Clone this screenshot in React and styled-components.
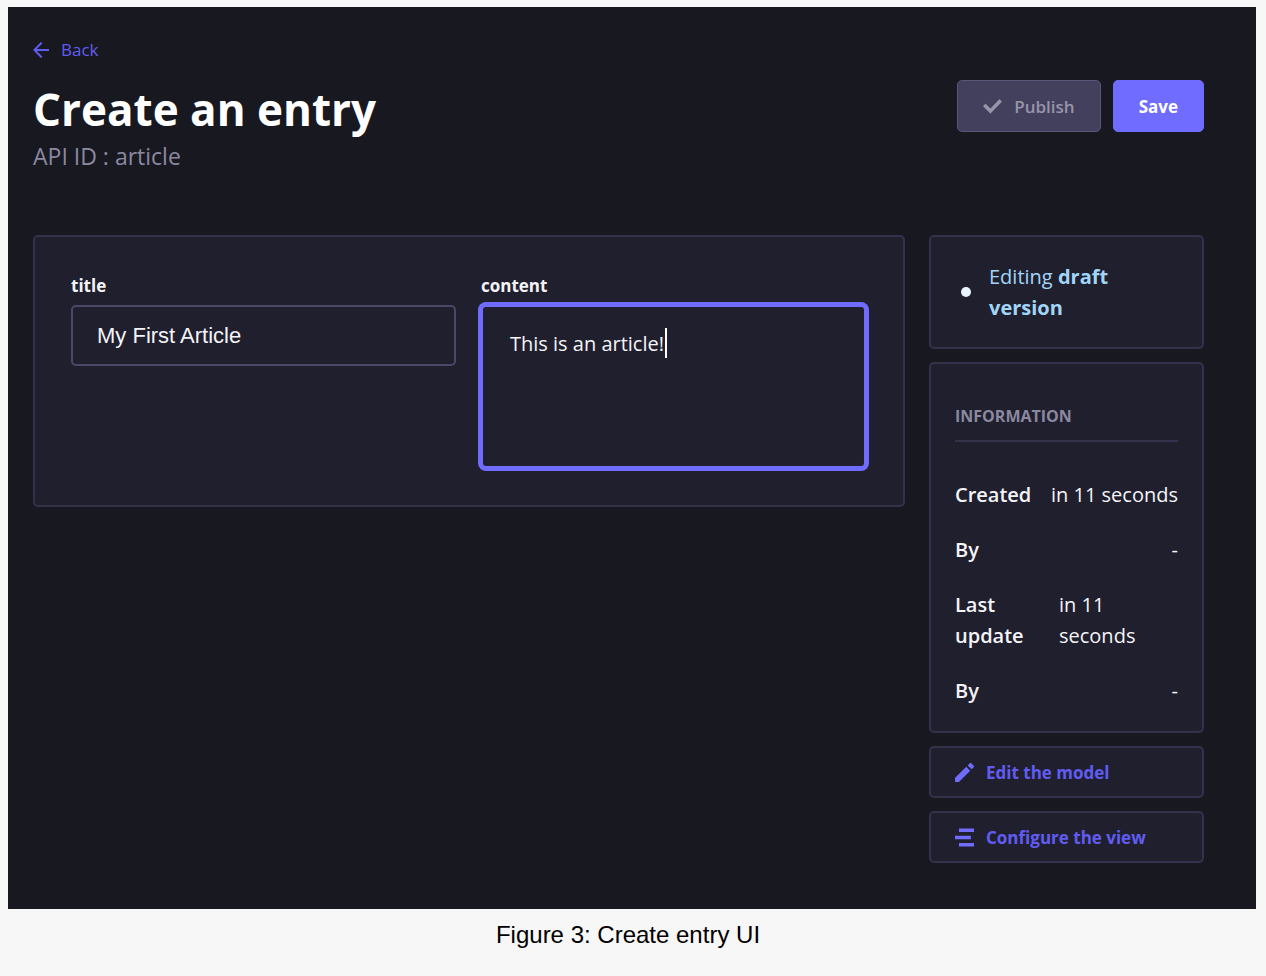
import React, { useState } from "react";
import styled, { createGlobalStyle } from "styled-components";

const colors = {
  page: "#f7f7f7",
  panel: "#181821",
  card: "#201f2e",
  cardBorder: "#34324a",
  inputBorder: "#4a4867",
  primary: "#706cff",
  link: "#605cf2",
  text: "#f4f4f8",
  muted: "#8a89a0",
  status: "#a2d6f8",
};

const GlobalStyle = createGlobalStyle`
  * { box-sizing: border-box; }
  body {
    margin: 0;
    background: ${colors.page};
    font-family: "Open Sans", "Noto Sans", sans-serif;
  }
`;

const Figure = styled.figure`
  margin: 0;
  padding: 7px 10px 24px 8px;
`;

const Caption = styled.figcaption`
  padding: 12px 8px 0 0;
  color: #000;
  font: 24px/28px "Liberation Sans", Arial, sans-serif;
  text-align: center;
`;

const Panel = styled.div`
  padding: 31px 52px 46px 25px;
  background: ${colors.panel};
  color: ${colors.text};
`;

const BackLink = styled.a`
  display: inline-flex;
  align-items: center;
  gap: 12px;
  color: ${colors.link};
  font-size: 17px;
  line-height: 24px;
  text-decoration: none;
  vertical-align: top;
`;

const Header = styled.header`
  display: flex;
  justify-content: space-between;
  align-items: flex-start;
  margin-top: 16px;
`;

const Title = styled.h1`
  margin: 0;
  color: #fff;
  font-size: 44px;
  font-weight: 700;
  line-height: 62px;
`;

const Subtitle = styled.p`
  margin: 0;
  color: ${colors.muted};
  font-size: 23px;
  line-height: 32px;
`;

const Actions = styled.div`
  display: flex;
  gap: 12px;
  padding-top: 2px;
`;

const Button = styled.button`
  display: flex;
  align-items: center;
  gap: 12px;
  height: 52px;
  padding: 0 25px;
  border: 1px solid ${(p) => (p.$primary ? colors.primary : "#59567a")};
  border-radius: 5px;
  background: ${(p) => (p.$primary ? colors.primary : "#43405e")};
  color: ${(p) => (p.$primary ? "#fff" : "#9695a8")};
  font-family: inherit;
  font-size: 17px;
  font-weight: ${(p) => (p.$primary ? 700 : 600)};
`;

const Layout = styled.div`
  display: grid;
  grid-template-columns: minmax(0, 1fr) 275px;
  align-items: start;
  gap: 24px;
  margin-top: 63px;
`;

const Card = styled.section`
  border: 2px solid ${colors.cardBorder};
  border-radius: 5px;
  background: ${colors.card};
`;

const FormCard = styled(Card)`
  display: grid;
  grid-template-columns: 1fr 1fr;
  align-items: start;
  gap: 25px;
  padding: 37px 37px 37px 36px;
`;

const Field = styled.div`
  display: flex;
  flex-direction: column;
  gap: 7px;
  min-width: 0;
`;

const Label = styled.label`
  font-size: 17px;
  font-weight: 700;
  line-height: 24px;
`;

const TextInput = styled.input`
  width: 100%;
  height: 61px;
  padding: 0 24px;
  border: 2px solid ${colors.inputBorder};
  border-radius: 5px;
  outline: none;
  background: ${colors.card};
  color: ${colors.text};
  font: 22px "Liberation Sans", Arial, sans-serif;
`;

const AreaWrap = styled.div`
  position: relative;
  display: flex;
`;

const TextArea = styled.textarea`
  width: 100%;
  height: 163px;
  padding: 21px 27px;
  border: 2px solid ${colors.primary};
  border-radius: 5px;
  outline: none;
  box-shadow: 0 0 0 3px ${colors.primary};
  resize: none;
  background: ${colors.card};
  color: ${colors.text};
  caret-color: transparent;
  font-family: inherit;
  font-size: 20px;
  line-height: 31px;
`;

const Caret = styled.span`
  position: absolute;
  top: 23px;
  left: 184px;
  width: 2px;
  height: 30px;
  background: #fff;
`;

const Aside = styled.aside`
  display: flex;
  flex-direction: column;
  gap: 13px;
`;

const StatusCard = styled(Card)`
  display: flex;
  align-items: center;
  gap: 18px;
  padding: 24px 24px 24px 30px;
  color: ${colors.status};
  font-size: 20px;
  line-height: 31px;
`;

const Dot = styled.span`
  flex: none;
  width: 10px;
  height: 10px;
  border-radius: 50%;
  background: #eaf5ff;
`;

const Strong = styled.strong`
  font-weight: 700;
`;

const InfoCard = styled(Card)`
  padding: 40px 24px 25px;
`;

const InfoTitle = styled.h2`
  margin: 0 0 37px;
  padding-bottom: 12px;
  border-bottom: 2px solid ${colors.cardBorder};
  color: ${colors.muted};
  font-size: 16px;
  font-weight: 700;
  line-height: 24px;
`;

const InfoList = styled.dl`
  display: flex;
  flex-direction: column;
  gap: 24px;
  margin: 0;
  font-size: 20px;
  line-height: 31px;
`;

const InfoRow = styled.div`
  display: grid;
  grid-template-columns: ${(p) => (p.$split ? "88px 1fr" : "auto auto")};
  justify-content: ${(p) => (p.$split ? "stretch" : "space-between")};
  column-gap: 16px;

  dt { font-weight: 600; }
  dd { margin: 0; }
`;

const CardLink = styled.a`
  display: flex;
  align-items: center;
  gap: 12px;
  height: 52px;
  padding: 0 24px;
  border: 2px solid ${colors.cardBorder};
  border-radius: 5px;
  background: ${colors.card};
  color: ${colors.link};
  font-size: 17px;
  font-weight: 700;
  text-decoration: none;

  svg { color: ${colors.primary}; }
`;

const Icon = ({ size, children }) => (
  <svg width={size} height={size} viewBox="0 0 24 24" fill="currentColor" aria-hidden="true">
    {children}
  </svg>
);

const info = [
  { label: "Created", value: "in 11 seconds" },
  { label: "By", value: "-" },
  { label: "Last update", value: "in 11 seconds", split: true },
  { label: "By", value: "-" },
];

export default function App() {
  const [title, setTitle] = useState("My First Article");
  const [content, setContent] = useState("This is an article!");

  return (
    <>
      <GlobalStyle />
      <Figure>
        <Panel>
          <BackLink href="#back">
            <Icon size={16}>
              <path d="M24 13.3a.2.2 0 01-.2.2H5.74l8.239 8.239a.2.2 0 010 .282L12.14 23.86a.2.2 0 01-.282 0L.14 12.14a.2.2 0 010-.282L11.86.14a.2.2 0 01.282 0L13.98 1.98a.2.2 0 010 .282L5.74 10.5H23.8c.11 0 .2.09.2.2v2.6z" />
            </Icon>
            Back
          </BackLink>
          <Header>
            <div>
              <Title>Create an entry</Title>
              <Subtitle>API ID : article</Subtitle>
            </div>
            <Actions>
              <Button type="button" disabled>
                <Icon size={19}>
                  <path d="M20.727 2.97a.2.2 0 01.286 0l2.85 2.89a.2.2 0 010 .28L9.554 20.854a.2.2 0 01-.285 0l-9.13-9.243a.2.2 0 010-.281l2.85-2.892a.2.2 0 01.284 0l6.14 6.209L20.726 2.97z" />
                </Icon>
                Publish
              </Button>
              <Button type="button" $primary>
                Save
              </Button>
            </Actions>
          </Header>
          <Layout>
            <FormCard as="form">
              <Field>
                <Label htmlFor="title">title</Label>
                <TextInput id="title" value={title} onChange={(e) => setTitle(e.target.value)} />
              </Field>
              <Field>
                <Label htmlFor="content">content</Label>
                <AreaWrap>
                  <TextArea id="content" value={content} onChange={(e) => setContent(e.target.value)} />
                  <Caret />
                </AreaWrap>
              </Field>
            </FormCard>
            <Aside>
              <StatusCard>
                <Dot />
                <span>
                  Editing <Strong>draft version</Strong>
                </span>
              </StatusCard>
              <InfoCard>
                <InfoTitle>INFORMATION</InfoTitle>
                <InfoList>
                  {info.map((row, i) => (
                    <InfoRow key={i} $split={row.split}>
                      <dt>{row.label}</dt>
                      <dd>{row.value}</dd>
                    </InfoRow>
                  ))}
                </InfoList>
              </InfoCard>
              <CardLink href="#model">
                <Icon size={19}>
                  <path d="M23.604 3.514c.528.528.528 1.36 0 1.887l-2.622 2.607-4.99-4.99L18.6.396a1.322 1.322 0 011.887 0l3.118 3.118zM0 24v-4.99l14.2-14.2 4.99 4.99L4.99 24H0z" />
                </Icon>
                Edit the model
              </CardLink>
              <CardLink href="#view">
                <Icon size={19}>
                  <path d="M5 .5h19v4.6H5zM0 9.7h20v4.6H0zM5 18.9h19v4.6H5z" />
                </Icon>
                Configure the view
              </CardLink>
            </Aside>
          </Layout>
        </Panel>
        <Caption>Figure 3: Create entry UI</Caption>
      </Figure>
    </>
  );
}
